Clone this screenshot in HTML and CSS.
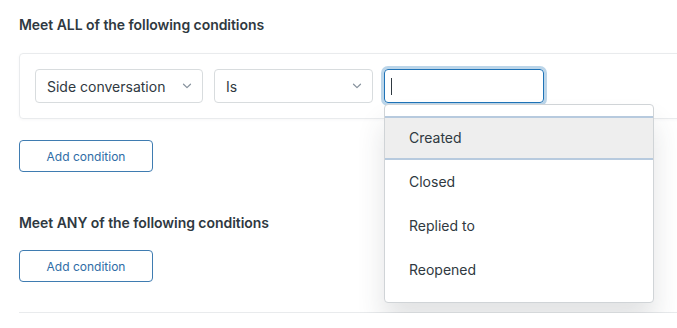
FILE: index.html
```html
<!DOCTYPE html>
<html lang="en">

<head>
    <meta charset="UTF-8">
    <meta name="viewport" content="width=device-width, initial-scale=1.0">
    <title>Conditions</title>

    <link rel="stylesheet" href="styles.css">
</head>

<body>
    <div class="page">
        <h3 class="section-title">Meet ALL of the following conditions</h3>

        <div class="condition-card">
            <div class="select select-field">
                <span>Side conversation</span>
                <svg class="chevron" width="10" height="6" viewBox="0 0 10 6"><path d="M1.5 1.2 5 4.6l3.5-3.4" fill="none" stroke="#87929d" stroke-width="1.2" stroke-linecap="round" stroke-linejoin="round"/></svg>
            </div>
            <div class="select select-op">
                <span>Is</span>
                <svg class="chevron" width="10" height="6" viewBox="0 0 10 6"><path d="M1.5 1.2 5 4.6l3.5-3.4" fill="none" stroke="#87929d" stroke-width="1.2" stroke-linecap="round" stroke-linejoin="round"/></svg>
            </div>
            <div class="combo">
                <div class="combo-input"><span class="caret"></span></div>
                <ul class="menu">
                    <li class="menu-item is-active">Created</li>
                    <li class="menu-item">Closed</li>
                    <li class="menu-item">Replied to</li>
                    <li class="menu-item">Reopened</li>
                </ul>
            </div>
        </div>

        <button type="button" class="btn-add">Add condition</button>

        <h3 class="section-title section-any">Meet ANY of the following conditions</h3>

        <button type="button" class="btn-add">Add condition</button>

        <hr class="divider">
    </div>
</body>

</html>
```

FILE: styles.css
```css
html,
body {
    margin: 0;
    padding: 0;
    background: #fff;
}

body {
    font-family: Inter, "Liberation Sans", sans-serif;
    color: #2f3941;
}

.page {
    padding: 16px 0 0 19px;
    overflow: hidden;
}

.section-title {
    margin: 0;
    font-size: 14px;
    line-height: 18px;
    font-weight: 600;
    letter-spacing: -0.05px;
}

.condition-card {
    margin: 19px -12px 0 0;
    padding: 15px;
    border: 1px solid #e9ebed;
    border-radius: 4px;
    display: flex;
    gap: 11px;
    box-shadow: 0 1px 3px rgba(47, 57, 65, 0.04);
}

.select {
    height: 34px;
    box-sizing: border-box;
    border: 1px solid #d8dcde;
    border-radius: 4px;
    display: flex;
    align-items: center;
    justify-content: space-between;
    padding: 0 10px 0 11px;
    font-size: 14px;
}

.select-field {
    width: 168px;
}

.select-op {
    width: 159px;
}

.chevron {
    flex: none;
}

.combo {
    position: relative;
}

.combo-input {
    width: 160px;
    height: 34px;
    box-sizing: border-box;
    border: 1px solid #1f73b7;
    border-radius: 4px;
    box-shadow: 0 0 0 3px rgba(31, 115, 183, 0.3);
    display: flex;
    align-items: center;
    padding-left: 6px;
}

.caret {
    width: 1px;
    height: 17px;
    background: #2f3941;
}

.menu {
    position: absolute;
    top: 35px;
    left: 0;
    width: 270px;
    box-sizing: border-box;
    margin: 0;
    padding: 11px 0 10px;
    list-style: none;
    background: #fff;
    border: 1px solid #d0d4d7;
    border-radius: 4px;
    box-shadow: 0 20px 28px rgba(47, 57, 65, 0.14);
    z-index: 2;
}

.menu-item {
    height: 44px;
    line-height: 44px;
    padding-left: 24px;
    font-size: 14px;
}

.menu-item.is-active {
    background: #eeeeee;
    box-shadow: inset 0 2px 0 #b7cade, inset 0 -2px 0 #b7cade;
}

.btn-add {
    display: block;
    width: 134px;
    height: 32px;
    margin-top: 21px;
    padding: 0;
    background: #fff;
    border: 1px solid #3f7cb1;
    border-radius: 4px;
    color: #2f6da6;
    font-family: inherit;
    font-size: 12px;
}

.section-any {
    margin-top: 42px;
}

.section-any + .btn-add {
    margin-top: 18px;
}

.divider {
    margin: 30px -12px 0 0;
    border: 0;
    border-top: 1px solid #e9ebed;
}
```
